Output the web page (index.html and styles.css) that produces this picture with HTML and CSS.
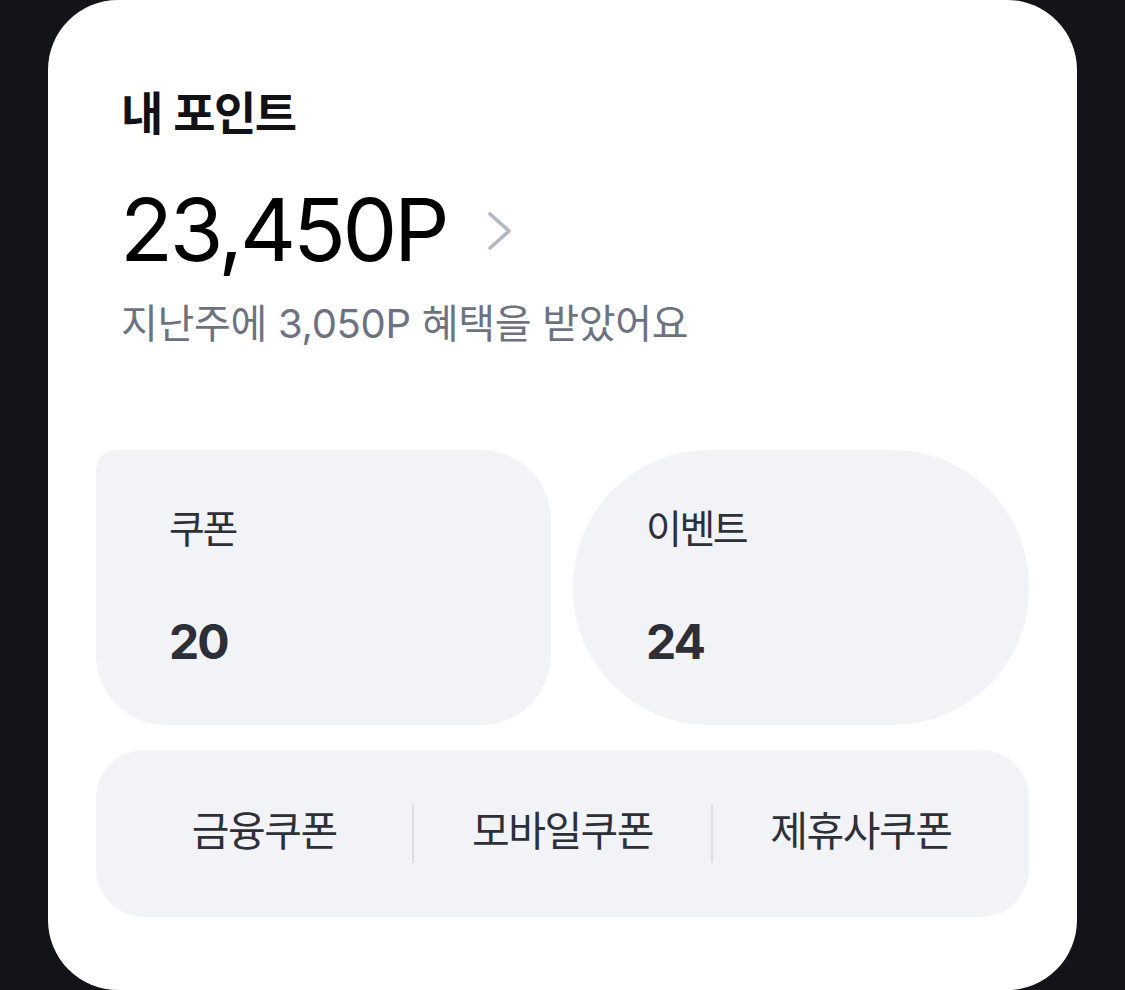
FILE: index.html
```html
<!DOCTYPE html>
<html lang="ko">
<head>
<meta charset="utf-8">
<title>내 포인트</title>
<link rel="stylesheet" href="styles.css">
</head>
<body>
<main class="card">
  <h1 class="title">내 포인트</h1>
  <div class="points-row">
    <span class="points">23,450P</span>
    <svg class="chevron" width="26" height="40" viewBox="0 0 26 40" aria-hidden="true">
      <path d="M3 3 L22 20 L3 37" fill="none" stroke="#b1b7c0" stroke-width="3.6" stroke-linecap="round" stroke-linejoin="round"/>
    </svg>
  </div>
  <p class="sub">지난주에 3,050P 혜택을 받았어요</p>
  <div class="tiles">
    <div class="tile tile-coupon">
      <span class="tile-label">쿠폰</span>
      <span class="tile-value">20</span>
    </div>
    <div class="tile tile-event">
      <span class="tile-label">이벤트</span>
      <span class="tile-value">24</span>
    </div>
  </div>
  <nav class="links">
    <span class="link">금융쿠폰</span>
    <span class="divider"></span>
    <span class="link">모바일쿠폰</span>
    <span class="divider"></span>
    <span class="link">제휴사쿠폰</span>
  </nav>
</main>
</body>
</html>
```

FILE: styles.css
```css
html, body {
  margin: 0;
  padding: 0;
}
body {
  background: #131419;
  font-family: Inter, "Noto Sans CJK KR", sans-serif;
  width: 1125px;
  height: 990px;
  overflow: hidden;
}
.card {
  box-sizing: border-box;
  margin: 0 48px;
  height: 990px;
  background: #ffffff;
  border-radius: 70px;
  padding: 82px 48px 0 48px;
  display: flex;
  flex-direction: column;
}
.title {
  margin: 0 0 0 25px;
  font-family: "Noto Sans CJK KR", sans-serif;
  font-size: 46px;
  font-weight: 700;
  letter-spacing: -1.5px;
  line-height: 56px;
  color: #111216;
}
.points-row {
  margin: 44px 0 0 24px;
  display: flex;
  align-items: center;
  gap: 41px;
  height: 96px;
}
.points {
  font-family: Inter, sans-serif;
  font-size: 87px;
  font-weight: 400;
  letter-spacing: -3.3px;
  color: #000000;
  line-height: 96px;
}
.chevron {
  display: block;
  margin-top: 2px;
}
.sub {
  margin: 20px 0 0 25px;
  font-family: Inter, "Noto Sans CJK KR", sans-serif;
  font-size: 40px;
  letter-spacing: -0.3px;
  line-height: 52px;
  color: #6d7281;
}
.tiles {
  margin-top: 100px;
  display: grid;
  grid-template-columns: 455px 456px;
  gap: 22px;
  height: 275px;
}
.tile {
  background: #f2f3f7;
  display: flex;
  flex-direction: column;
  padding: 50px 0 0 73px;
  box-sizing: border-box;
}
.tile-coupon {
  border-radius: 20px 70px 70px 70px;
}
.tile-event {
  border-radius: 136px;
}
.tile-label {
  font-family: "Noto Sans CJK KR", sans-serif;
  font-size: 39px;
  letter-spacing: -2.5px;
  line-height: 52px;
  color: #2e3038;
}
.tile-value {
  margin-top: 62px;
  font-family: Inter, sans-serif;
  font-size: 48px;
  font-weight: 700;
  letter-spacing: -2px;
  line-height: 56px;
  color: #2c2f38;
}
.links {
  margin-top: 25px;
  height: 167px;
  background: #f2f3f7;
  border-radius: 48px;
  display: flex;
  align-items: center;
  padding: 0 20px;
  box-sizing: border-box;
}
.link {
  flex: 1;
  text-align: center;
  font-family: "Noto Sans CJK KR", sans-serif;
  font-size: 41px;
  letter-spacing: -1.5px;
  line-height: 52px;
  padding-bottom: 12px;
  color: #2e3038;
}
.divider {
  width: 2px;
  height: 59px;
  background: #dcdee3;
}
```
